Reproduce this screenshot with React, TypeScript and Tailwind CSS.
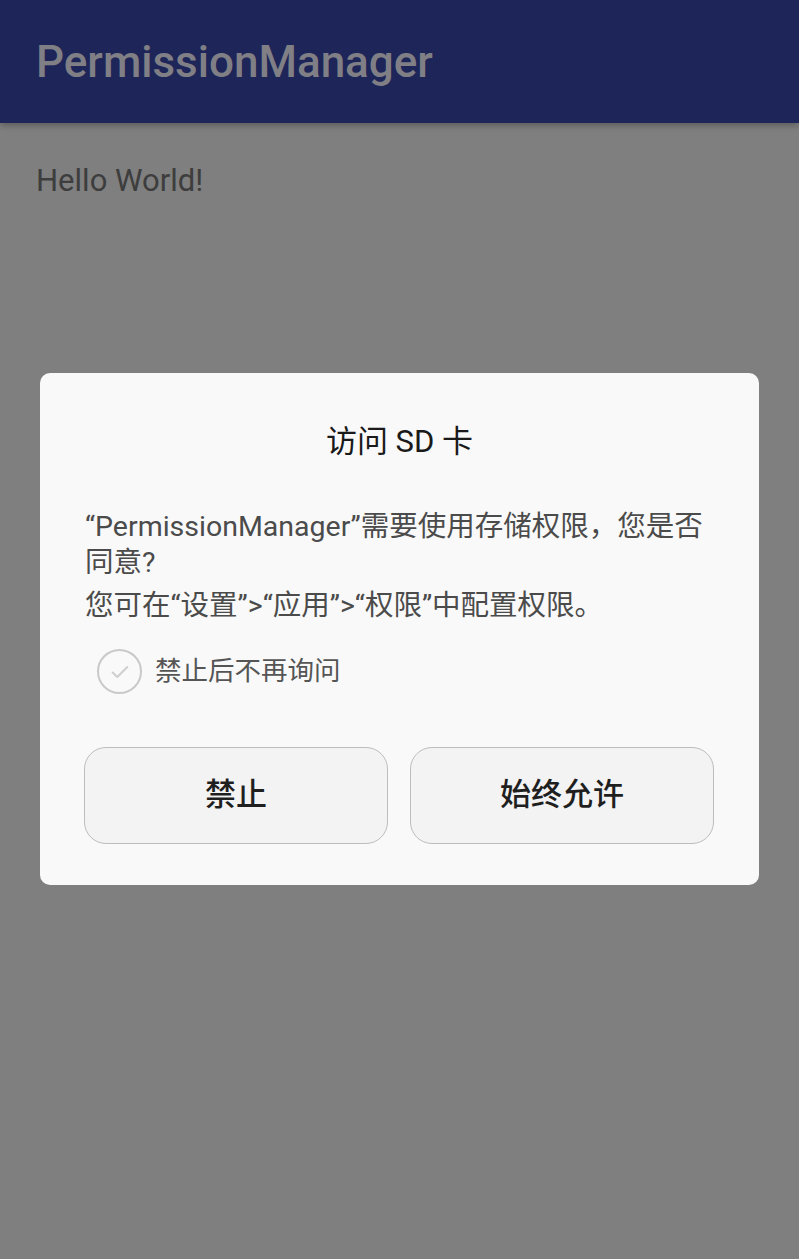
export default function App() {
  return (
    <div className="relative w-[799px] h-[1259px] bg-[#7f7f7f] overflow-hidden font-['Roboto','Noto_Sans_CJK_SC',sans-serif]">
      {/* App bar */}
      <div className="h-[123px] bg-[#1e2559] flex items-center px-[36px] shadow-[0_3px_6px_rgba(0,0,0,0.25)]">
        <h1 className="text-[44px] font-medium text-[#7f7f85] leading-none">PermissionManager</h1>
      </div>

      {/* Content */}
      <p className="px-[36px] pt-[42px] text-[31px] leading-none text-[#3d3d3d]">Hello World!</p>

      {/* Dialog */}
      <div className="absolute left-[40px] top-[373px] w-[719px] h-[512px] bg-[#f9f9f9] rounded-[10px] px-[45px]">
        <h2 className="mt-[49px] text-center text-[31px] leading-[40px] text-[#1a1a1a]">访问 SD 卡</h2>

        <div className="mt-[47px] text-[28.5px] text-[#4b4b4b]">
          <p className="leading-[36px]">“PermissionManager”需要使用存储权限，您是否同意?</p>
          <p className="mt-[7px] leading-[36px]">您可在“设置”&gt;“应用”&gt;“权限”中配置权限。</p>
        </div>

        <div className="mt-[25px] ml-[12px] flex items-center gap-[13px]">
          <div className="w-[45px] h-[45px] rounded-full border-2 border-[#c9c9c9] flex items-center justify-center">
            <svg width="22" height="22" viewBox="0 0 24 24" fill="none" stroke="#cfcfcf" strokeWidth="2.2" strokeLinecap="round" strokeLinejoin="round">
              <path d="M4 12.5l5 5L20 6.5" />
            </svg>
          </div>
          <span className="text-[26.5px] leading-none text-[#555555]">禁止后不再询问</span>
        </div>

        <div className="mt-[53px] flex gap-[22px] -ml-[1px]">
          <button className="w-[304px] h-[97px] rounded-[22px] bg-[#f3f3f3] border border-[#bdbdbd] text-[31px] text-[#1f1f1f] font-medium">禁止</button>
          <button className="w-[304px] h-[97px] rounded-[22px] bg-[#f3f3f3] border border-[#bdbdbd] text-[31px] text-[#1f1f1f] font-medium">始终允许</button>
        </div>
      </div>
    </div>
  );
}
